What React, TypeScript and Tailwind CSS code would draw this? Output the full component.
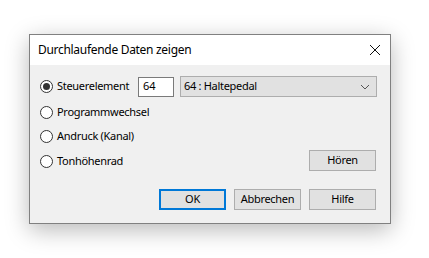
import { useState } from 'react';

const FONT = { fontFamily: "'Noto Sans', 'Segoe UI', sans-serif" };

function Radio({ label, checked, onClick }: { label: string; checked: boolean; onClick: () => void }) {
  return (
    <div className="flex items-center h-[20px] cursor-default" onClick={onClick}>
      <div className="ml-[10px] w-[13px] h-[13px] rounded-full border border-[#333333] bg-white flex items-center justify-center">
        {checked && <div className="w-[7px] h-[7px] rounded-full bg-[#333333]" />}
      </div>
      <span className="ml-[4px] tracking-[-0.3px]">{label}</span>
    </div>
  );
}

function Button({ label, primary }: { label: string; primary?: boolean }) {
  return (
    <button
      className={
        primary
          ? 'w-[67px] h-[21px] bg-[#e1e1e1] border-2 border-[#0078d7] flex items-center justify-center tracking-[-0.3px]'
          : 'w-[67px] h-[21px] bg-[#e1e1e1] border border-[#adadad] flex items-center justify-center tracking-[-0.3px]'
      }
    >
      {label}
    </button>
  );
}

export default function App() {
  const [sel, setSel] = useState(0);
  const options = ['Programmwechsel', 'Andruck (Kanal)', 'Tonhöhenrad'];

  return (
    <div className="w-[429px] h-[258px] bg-white pt-[34px] pl-[29px] text-[11px] text-black" style={FONT}>
      <div className="w-[362px] h-[190px] border border-[#808080] bg-[#f0f0f0] flex flex-col shadow-[0_6px_22px_rgba(0,0,0,0.28)]">
        {/* Titelleiste */}
        <div className="h-[30px] bg-white flex items-center justify-between pl-[8px] pr-[9px] shrink-0">
          <span className="text-[12px] tracking-[-0.3px]">Durchlaufende Daten zeigen</span>
          <svg width="12" height="12" viewBox="0 0 12 12">
            <path d="M1 1 L11 11 M11 1 L1 11" stroke="#111" strokeWidth="1" />
          </svg>
        </div>

        <div className="flex flex-col pt-[11px] pr-[13px]">
          <div className="flex items-center">
            <div className="w-[108px]">
              <Radio label="Steuerelement" checked={sel === 0} onClick={() => setSel(0)} />
            </div>
            <div className="w-[36px] h-[20px] bg-white border border-[#7a7a7a] flex items-center pl-[4px]">64</div>
            <div className="ml-[6px] flex-1 h-[21px] bg-[#e1e1e1] border border-[#adadad] flex items-center justify-between pl-[3px] pr-[6px]">
              <span className="tracking-[-0.3px]">64 : Haltepedal</span>
              <svg width="10" height="6" viewBox="0 0 10 6">
                <path d="M1 1 L5 5 L9 1" stroke="#555" strokeWidth="1" fill="none" />
              </svg>
            </div>
          </div>

          <div className="flex justify-between items-end pb-[8px]">
            <div className="flex flex-col">
              {options.map((o, i) => (
                <div key={o} className={i === 0 ? 'mt-[5px]' : i === 1 ? 'mt-[4px]' : 'mt-[5px]'}>
                  <Radio label={o} checked={sel === i + 1} onClick={() => setSel(i + 1)} />
                </div>
              ))}
            </div>
            <div className="mr-[1px]">
              <Button label="Hören" />
            </div>
          </div>

          <div className="flex justify-end gap-[8px] mt-[10px] mr-[1px]">
            <Button label="OK" primary />
            <Button label="Abbrechen" />
            <Button label="Hilfe" />
          </div>
        </div>
      </div>
    </div>
  );
}
